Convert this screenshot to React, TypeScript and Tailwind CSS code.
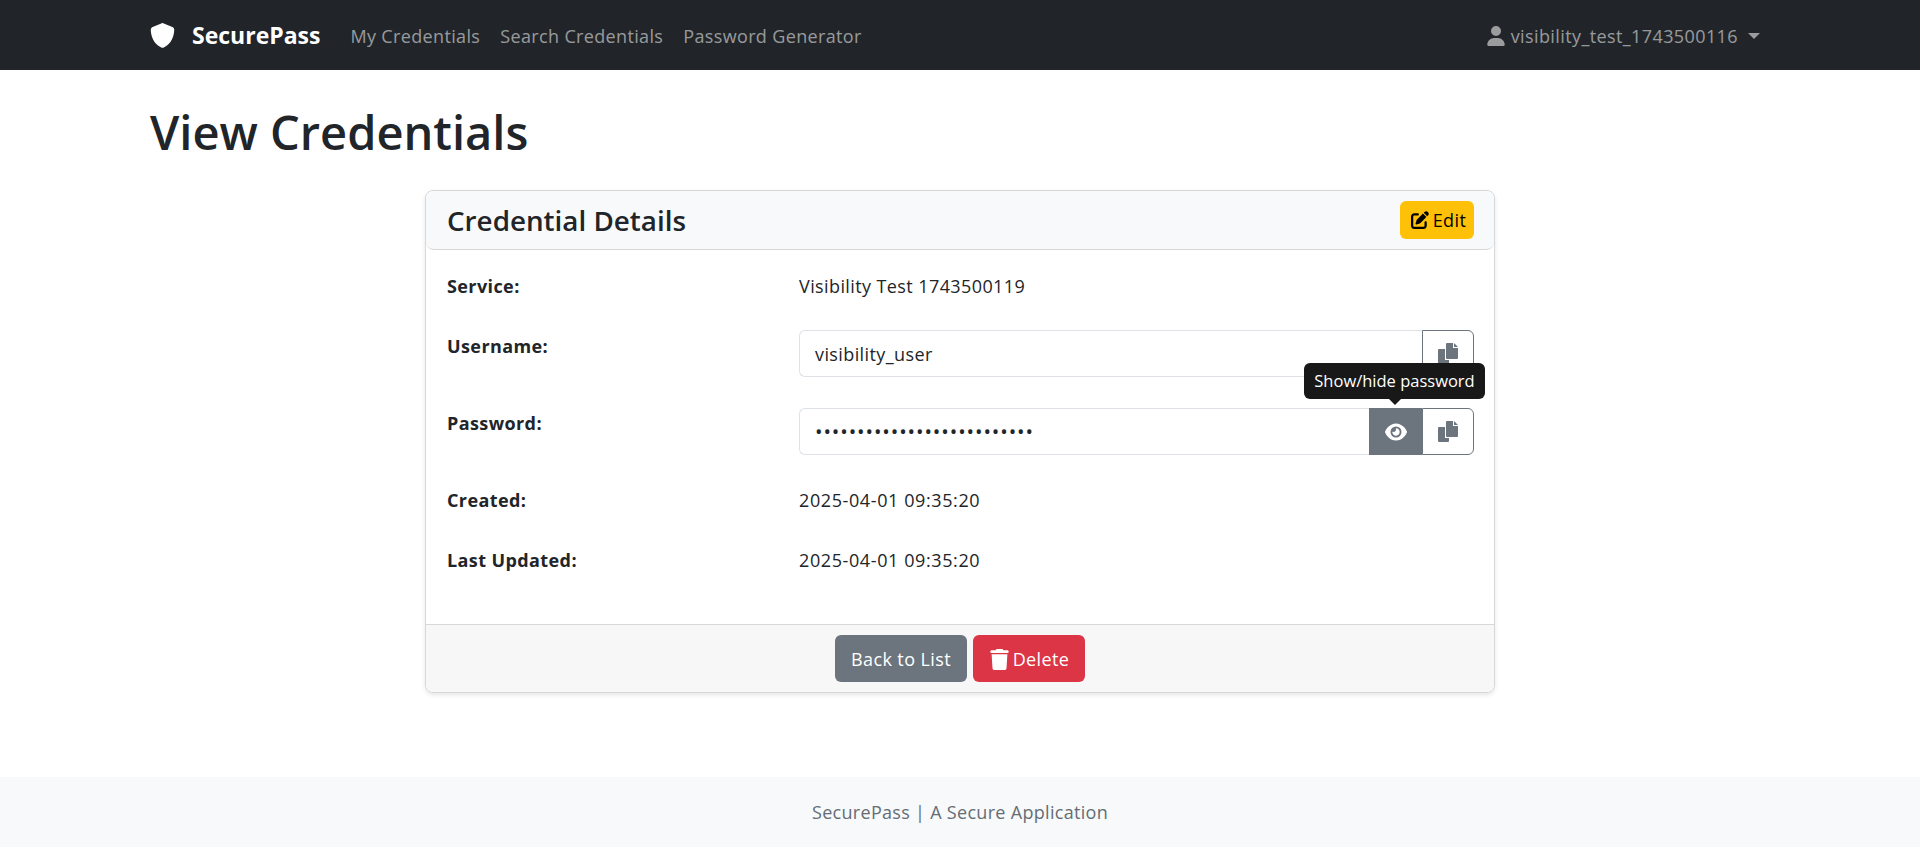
import React from 'react';
import { FaEye, FaPenToSquare, FaShield, FaTrash, FaUser } from 'react-icons/fa6';

const Row: React.FC<{ label: string; children: React.ReactNode; className?: string; labelClass?: string }> = ({ label, children, className, labelClass }) => (
  <div className={`flex ${className ?? ''}`}>
    <div className={`w-[352px] font-bold shrink-0 leading-[26px] ${labelClass ?? ''}`}>{label}</div>
    <div className="flex-1 leading-[26px]">{children}</div>
  </div>
);

const InputBox: React.FC<{ value: string; dots?: boolean; children: React.ReactNode }> = ({ value, dots, children }) => (
  <div className="flex h-[47px]">
    <div className={`flex-1 flex items-center pl-[15px] border border-[#dee2e6] border-r-0 rounded-l-md bg-white ${dots ? 'text-[20px] tracking-[0.9px]' : ''}`}>{value}</div>
    {children}
  </div>
);

// two sheets, the reference icon is squarer than the FA one
const CopyIcon = () => (
  <svg width="20" height="21" viewBox="0 0 20 21" fill="currentColor">
    <path d="M1 6H7V17H11V20a1 1 0 0 1-1 1H1a1 1 0 0 1-1-1V7a1 1 0 0 1 1-1z" />
    <path d="M9 0H15V5H20V15a1 1 0 0 1-1 1H9a1 1 0 0 1-1-1V1a1 1 0 0 1 1-1z" />
    <path d="M16 0L20 4H16z" />
  </svg>
);

const CopyBtn = () => (
  <div className="w-[52px] flex items-center justify-center border border-[#6c757d] rounded-r-md bg-white text-[#6c757d]">
    <CopyIcon />
  </div>
);

export default function App() {
  return (
    <div className="min-h-[847px] flex flex-col bg-white font-['Open_Sans',sans-serif] text-[18px] tracking-[0.4px] text-[#212529]">
      <nav className="h-[70px] bg-[#212529] flex items-center px-[150px] pt-px">
        <div className="flex items-center text-white font-bold text-[23px] tracking-normal mr-[30px]">
          <FaShield className="text-[25px]" />
          <span className="ml-[17px]">SecurePass</span>
        </div>
        <div className="flex items-center gap-5 pt-px text-[#ffffff8c] tracking-[0.35px]">
          <span>My Credentials</span>
          <span>Search Credentials</span>
          <span>Password Generator</span>
        </div>
        <div className="ml-auto flex items-center pt-px mr-[10px] text-[#ffffff8c]">
          <FaUser className="text-[20px] mr-[5px]" />
          <span>visibility_test_1743500116</span>
          <span className="ml-[10px] w-0 h-0 border-x-[6px] border-x-transparent border-t-[6px] border-t-[#ffffff8c]" />
        </div>
      </nav>

      <main className="px-[150px] flex-1">
        <h1 className="text-[47px] font-semibold tracking-normal mt-[33px] mb-[29px] leading-[58px]">View Credentials</h1>
        <div className="w-[1070px] mx-auto border border-[#d5d7d9] rounded-lg shadow-[0_2px_4px_rgba(0,0,0,0.1)]">
          <div className="h-[59px] bg-[#f8f9fa] border-b border-[#d5d7d9] rounded-lg flex items-center justify-between pl-[21px] pr-[20px]">
            <h2 className="text-[27.8px] font-semibold tracking-normal pt-[2px]">Credential Details</h2>
            <div className="h-[38px] w-[74px] pl-[3px] flex items-center justify-center gap-[4px] bg-[#ffc107] rounded-md text-black">
              <FaPenToSquare className="text-[18px]" />
              <span>Edit</span>
            </div>
          </div>
          <div className="pl-[21px] pr-5 pt-[23px] pb-[51px] flex flex-col">
            <Row label="Service:" className="mb-[31px]">Visibility Test 1743500119</Row>
            <Row label="Username:" labelClass="pt-[3px]" className="mb-[31px]">
              <InputBox value="visibility_user"><CopyBtn /></InputBox>
            </Row>
            <Row label="Password:" labelClass="pt-[2px]" className="mb-[32px]">
              <div className="relative">
                <InputBox value="••••••••••••••••••••••••••" dots>
                  <div className="w-[53px] flex items-center justify-center bg-[#6c757d] text-white">
                    <FaEye className="text-[22px]" />
                  </div>
                  <CopyBtn />
                </InputBox>
                <div className="absolute right-[-11px] top-[-45px] h-[36px] w-[181px] flex items-center justify-center bg-[#181818] text-white text-[16.5px] tracking-normal rounded-md whitespace-nowrap">
                  Show/hide password
                  <span className="absolute left-[85px] bottom-[-6px] w-0 h-0 border-x-[6px] border-x-transparent border-t-[6px] border-t-[#181818]" />
                </div>
              </div>
            </Row>
            <Row label="Created:" className="mb-[34px]"><span className="tracking-[0.6px]">2025-04-01 09:35:20</span></Row>
            <Row label="Last Updated:"><span className="tracking-[0.6px]">2025-04-01 09:35:20</span></Row>
          </div>
          <div className="h-[68px] bg-[#f7f7f7] border-t border-[#d5d7d9] rounded-b-lg flex items-center justify-center gap-[6px]">
            <div className="h-[47px] w-[132px] pt-px flex items-center justify-center bg-[#6c757d] text-white rounded-md">Back to List</div>
            <div className="h-[47px] w-[112px] pt-px flex items-center justify-center gap-[3px] bg-[#dc3545] text-white rounded-md">
              <FaTrash className="text-[21px]" />
              <span>Delete</span>
            </div>
          </div>
        </div>
      </main>

      <footer className="h-[70px] pt-px bg-[#f8f9fa] flex items-center justify-center text-[#656d75] tracking-[0.3px]">
        SecurePass | A Secure Application
      </footer>
    </div>
  );
}
